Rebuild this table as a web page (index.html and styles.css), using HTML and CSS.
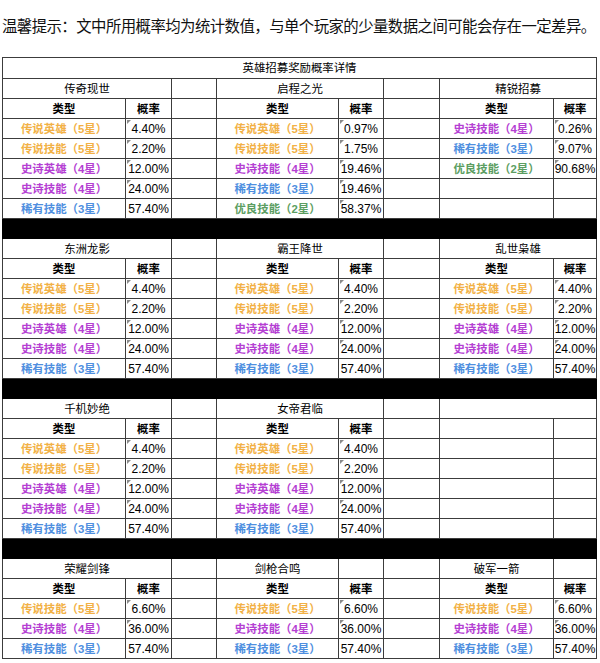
FILE: index.html
```html
<!DOCTYPE html>
<html lang="zh-CN">
<head>
<meta charset="utf-8">
<title>英雄招募奖励概率详情</title>
<link rel="stylesheet" href="styles.css">
</head>
<body>
<div class="notice">温馨提示：文中所用概率均为统计数值，与单个玩家的少量数据之间可能会存在一定差异。</div>
<table class="rates">
<colgroup>
<col class="w1"><col class="w2"><col class="w3"><col class="w4"><col class="w5"><col class="w6"><col class="w7"><col class="w8">
</colgroup>
<tr class="top"><td colspan="8">英雄招募奖励概率详情</td></tr>

<tr><td colspan="2">传奇现世</td><td></td><td colspan="2">启程之光</td><td></td><td colspan="2">精锐招募</td></tr>
<tr class="head"><td>类型</td><td>概率</td><td></td><td>类型</td><td>概率</td><td></td><td>类型</td><td>概率</td></tr>
<tr><td class="c5">传说英雄（5星）</td><td class="p m">4.40%</td><td></td><td class="c5">传说英雄（5星）</td><td class="p m">0.97%</td><td></td><td class="c4">史诗技能（4星）</td><td class="p m">0.26%</td></tr>
<tr><td class="c5">传说技能（5星）</td><td class="p m">2.20%</td><td></td><td class="c5">传说技能（5星）</td><td class="p m">1.75%</td><td></td><td class="c3">稀有技能（3星）</td><td class="p m">9.07%</td></tr>
<tr><td class="c4">史诗英雄（4星）</td><td class="p m">12.00%</td><td></td><td class="c4">史诗技能（4星）</td><td class="p m">19.46%</td><td></td><td class="c2">优良技能（2星）</td><td class="p m">90.68%</td></tr>
<tr><td class="c4">史诗技能（4星）</td><td class="p m">24.00%</td><td></td><td class="c3">稀有技能（3星）</td><td class="p m">19.46%</td><td></td><td></td><td></td></tr>
<tr><td class="c3">稀有技能（3星）</td><td class="p">57.40%</td><td></td><td class="c2">优良技能（2星）</td><td class="p m">58.37%</td><td></td><td></td><td></td></tr>
<tr class="bar"><td colspan="8"></td></tr>

<tr><td colspan="2">东洲龙影</td><td></td><td colspan="2">霸王降世</td><td></td><td colspan="2">乱世枭雄</td></tr>
<tr class="head"><td>类型</td><td>概率</td><td></td><td>类型</td><td>概率</td><td></td><td>类型</td><td>概率</td></tr>
<tr><td class="c5">传说英雄（5星）</td><td class="p m">4.40%</td><td></td><td class="c5">传说英雄（5星）</td><td class="p m">4.40%</td><td></td><td class="c5">传说英雄（5星）</td><td class="p m">4.40%</td></tr>
<tr><td class="c5">传说技能（5星）</td><td class="p m">2.20%</td><td></td><td class="c5">传说技能（5星）</td><td class="p m">2.20%</td><td></td><td class="c5">传说技能（5星）</td><td class="p m">2.20%</td></tr>
<tr><td class="c4">史诗英雄（4星）</td><td class="p m">12.00%</td><td></td><td class="c4">史诗英雄（4星）</td><td class="p m">12.00%</td><td></td><td class="c4">史诗英雄（4星）</td><td class="p m">12.00%</td></tr>
<tr><td class="c4">史诗技能（4星）</td><td class="p m">24.00%</td><td></td><td class="c4">史诗技能（4星）</td><td class="p m">24.00%</td><td></td><td class="c4">史诗技能（4星）</td><td class="p m">24.00%</td></tr>
<tr><td class="c3">稀有技能（3星）</td><td class="p">57.40%</td><td></td><td class="c3">稀有技能（3星）</td><td class="p">57.40%</td><td></td><td class="c3">稀有技能（3星）</td><td class="p">57.40%</td></tr>
<tr class="bar"><td colspan="8"></td></tr>

<tr><td colspan="2">千机妙绝</td><td></td><td colspan="2">女帝君临</td><td></td><td colspan="2"></td></tr>
<tr class="head"><td>类型</td><td>概率</td><td></td><td>类型</td><td>概率</td><td></td><td></td><td></td></tr>
<tr><td class="c5">传说英雄（5星）</td><td class="p m">4.40%</td><td></td><td class="c5">传说英雄（5星）</td><td class="p m">4.40%</td><td></td><td></td><td></td></tr>
<tr><td class="c5">传说技能（5星）</td><td class="p m">2.20%</td><td></td><td class="c5">传说技能（5星）</td><td class="p m">2.20%</td><td></td><td></td><td></td></tr>
<tr><td class="c4">史诗英雄（4星）</td><td class="p m">12.00%</td><td></td><td class="c4">史诗英雄（4星）</td><td class="p m">12.00%</td><td></td><td></td><td></td></tr>
<tr><td class="c4">史诗技能（4星）</td><td class="p m">24.00%</td><td></td><td class="c4">史诗技能（4星）</td><td class="p m">24.00%</td><td></td><td></td><td></td></tr>
<tr><td class="c3">稀有技能（3星）</td><td class="p">57.40%</td><td></td><td class="c3">稀有技能（3星）</td><td class="p">57.40%</td><td></td><td></td><td></td></tr>
<tr class="bar"><td colspan="8"></td></tr>

<tr><td colspan="2">荣耀剑锋</td><td></td><td>剑枪合鸣</td><td></td><td></td><td>破军一箭</td><td></td></tr>
<tr class="head"><td>类型</td><td>概率</td><td></td><td>类型</td><td>概率</td><td></td><td>类型</td><td>概率</td></tr>
<tr><td class="c5">传说技能（5星）</td><td class="p m">6.60%</td><td></td><td class="c5">传说技能（5星）</td><td class="p m">6.60%</td><td></td><td class="c5">传说技能（5星）</td><td class="p m">6.60%</td></tr>
<tr><td class="c4">史诗技能（4星）</td><td class="p m">36.00%</td><td></td><td class="c4">史诗技能（4星）</td><td class="p m">36.00%</td><td></td><td class="c4">史诗技能（4星）</td><td class="p m">36.00%</td></tr>
<tr><td class="c3">稀有技能（3星）</td><td class="p">57.40%</td><td></td><td class="c3">稀有技能（3星）</td><td class="p">57.40%</td><td></td><td class="c3">稀有技能（3星）</td><td class="p">57.40%</td></tr>
</table>
</body>
</html>
```
FILE: styles.css
```css
html, body {
  margin: 0;
  padding: 0;
  background: #ffffff;
}
body {
  font-family: "Liberation Sans", "Noto Sans CJK SC", sans-serif;
  color: #000;
}
.notice {
  height: 50px;
  line-height: 50px;
  padding-left: 2px;
  font-family: "Noto Sans CJK SC", sans-serif;
  font-size: 15.4px;
  letter-spacing: -0.55px;
  white-space: nowrap;
  color: #111;
}
.rates {
  margin: 7px 0 0 2px;
  width: 595px;
  table-layout: fixed;
  border-collapse: collapse;
  font-size: 11.4px;
}
.w1 { width: 123px; }
.w2 { width: 46px; }
.w3 { width: 45px; }
.w4 { width: 122px; }
.w5 { width: 45px; }
.w6 { width: 56px; }
.w7 { width: 114px; }
.w8 { width: 43px; }
.rates tr {
  height: 20px;
}
.rates tr.top {
  height: 21px;
}
.rates td {
  border: 1px solid #3c3c3c;
  padding: 0;
  text-align: center;
  white-space: nowrap;
  overflow: hidden;
  line-height: 18px;
}
.rates .head td {
  font-weight: bold;
}
.rates td.p {
  font-size: 12px;
  position: relative;
}
.rates td.m::before {
  content: "";
  position: absolute;
  left: 1px;
  top: 1px;
  width: 0;
  height: 0;
  border-top: 4px solid #8a8a8a;
  border-right: 4px solid transparent;
}
.rates .bar td {
  background: #000;
  border-color: #000;
}
.c5 { color: #f2b146; font-weight: bold; }
.c4 { color: #b53fd3; font-weight: bold; }
.c3 { color: #4f8fe0; font-weight: bold; }
.c2 { color: #5c9e62; font-weight: bold; }
```
